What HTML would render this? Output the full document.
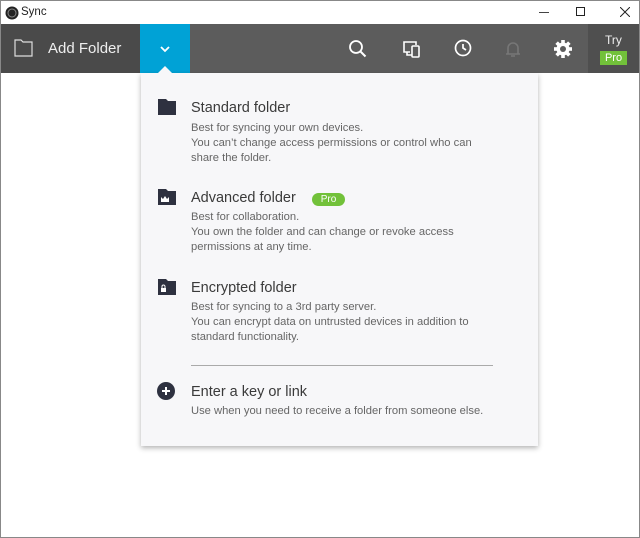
<!DOCTYPE html>
<html><head><style>
*{margin:0;padding:0;box-sizing:border-box}
body{width:640px;height:538px;overflow:hidden;background:#fff;font-family:"Liberation Sans",sans-serif;position:relative}
.abs{position:absolute}
.t{position:absolute;left:191px;font-size:14.5px;color:#3a3a3a}
.d{position:absolute;left:191px;font-size:11.2px;color:#666;line-height:15px}
</style></head><body>
<div class="abs" style="left:0;top:0;width:640px;height:538px;border:1px solid #888"></div>
<svg class="abs" style="left:5px;top:6px" width="14" height="14"><circle cx="7" cy="7" r="6.5" fill="#222"/><circle cx="7" cy="7" r="4" fill="none" stroke="#888" stroke-width="1"/></svg>
<div class="abs" style="left:21px;top:6px;font-size:11.5px;color:#222">Sync</div>
<div class="abs" style="left:539px;top:12px;width:10px;height:1px;background:#444"></div>
<div class="abs" style="left:576px;top:7px;width:9px;height:9px;border:1px solid #222"></div>
<svg class="abs" style="left:620px;top:7px" width="10" height="10"><path d="M0 0l10 10M10 0L0 10" stroke="#222" stroke-width="1"/></svg>
<div class="abs" style="left:1px;top:24px;width:638px;height:49px;background:#5c5c5c"></div>
<div class="abs" style="left:1px;top:24px;width:139px;height:49px;background:#4a4a4a"></div>
<div class="abs" style="left:140px;top:24px;width:50px;height:49px;background:#00a2d6"></div>
<div class="abs" style="left:588px;top:24px;width:51px;height:49px;background:#4f4f4f"></div>
<svg class="abs" style="left:14px;top:38px" width="20" height="20"><path d="M1 2h6l2 2h9v14H1z" fill="none" stroke="#ddd" stroke-width="1.2"/></svg>
<div class="abs" style="left:48px;top:40px;font-size:15px;color:#eee">Add Folder</div>
<svg class="abs" style="left:159px;top:45px" width="12" height="8"><path d="M2 2l4 4 4-4" fill="none" stroke="#fff" stroke-width="1.8"/></svg>
<svg class="abs" style="left:348px;top:39px" width="20" height="20"><circle cx="8" cy="8" r="6" fill="none" stroke="#fff" stroke-width="1.8"/><path d="M12.5 12.5l5 5" stroke="#fff" stroke-width="2"/></svg>
<svg class="abs" style="left:402px;top:40px" width="20" height="18"><path d="M8 12H2V2h12v3" fill="none" stroke="#fff" stroke-width="1.6"/><rect x="10" y="6" width="7" height="11" rx="1" fill="none" stroke="#fff" stroke-width="1.6"/><path d="M5 12v3h5" fill="none" stroke="#fff" stroke-width="1.6"/></svg>
<svg class="abs" style="left:454px;top:39px" width="20" height="20"><circle cx="9" cy="9" r="7.5" fill="none" stroke="#fff" stroke-width="1.7"/><path d="M9 5v4l3 2" fill="none" stroke="#fff" stroke-width="1.7"/></svg>
<svg class="abs" style="left:504px;top:39px" width="20" height="20"><path d="M4 15V9a5 5 0 0110 0v6zM2 15h14M7 17h4" fill="none" stroke="#777" stroke-width="1.6"/></svg>
<svg class="abs" style="left:553px;top:39px" width="20" height="20"><g fill="#fff" transform="translate(10 10)"><circle r="6.5"/><rect x="-1.8" y="-9" width="3.6" height="18"/><rect x="-1.8" y="-9" width="3.6" height="18" transform="rotate(45)"/><rect x="-1.8" y="-9" width="3.6" height="18" transform="rotate(90)"/><rect x="-1.8" y="-9" width="3.6" height="18" transform="rotate(135)"/></g><circle cx="10" cy="10" r="3" fill="#5c5c5c"/></svg>
<div class="abs" style="left:605px;top:33px;font-size:12px;color:#eee">Try</div>
<div class="abs" style="left:600px;top:51px;width:27px;height:14px;background:#72c13a;color:#fff;font-size:11px;text-align:center;line-height:14px">Pro</div>
<div class="abs" style="left:141px;top:73px;width:397px;height:373px;background:#f7f7f9;box-shadow:0 2px 5px rgba(0,0,0,.3)"></div>
<svg class="abs" style="left:157px;top:65px" width="18" height="9"><path d="M0 9l8-8 8 8z" fill="#f7f7f9"/></svg>
<svg class="abs" style="left:158px;top:99px" width="18" height="16"><path d="M0 0h8l2 2h8v14H0z" fill="#2e3140"/></svg>
<div class="t" style="top:100px">Standard folder</div>
<div class="d" style="top:121px">Best for syncing your own devices.<br>You can’t change access permissions or control who can<br>share the folder.</div>
<svg class="abs" style="left:158px;top:189px" width="18" height="16"><path d="M0 0h8l2 2h8v14H0z" fill="#2e3140"/><path d="M3 13l0-5 2 2 2-3 2 3 2-2 0 5z" fill="#fff"/></svg>
<div class="t" style="top:190px">Advanced folder</div>
<div class="abs" style="left:312px;top:193px;width:33px;height:13px;border-radius:7px;background:#72c13a;color:#fff;font-size:10px;text-align:center;line-height:13px">Pro</div>
<div class="d" style="top:210px">Best for collaboration.<br>You own the folder and can change or revoke access<br>permissions at any time.</div>
<svg class="abs" style="left:158px;top:279px" width="18" height="16"><path d="M0 0h8l2 2h8v14H0z" fill="#2e3140"/><rect x="3" y="9" width="5" height="4" fill="#fff"/><path d="M4 9V7.5a1.5 1.5 0 013 0V9" fill="none" stroke="#fff"/></svg>
<div class="t" style="top:280px">Encrypted folder</div>
<div class="d" style="top:300px">Best for syncing to a 3rd party server.<br>You can encrypt data on untrusted devices in addition to<br>standard functionality.</div>
<div class="abs" style="left:191px;top:365px;width:302px;height:1px;background:#aaa"></div>
<svg class="abs" style="left:157px;top:382px" width="18" height="18"><circle cx="9" cy="9" r="9" fill="#2e3140"/><path d="M9 5v8M5 9h8" stroke="#fff" stroke-width="2"/></svg>
<div class="t" style="top:384px">Enter a key or link</div>
<div class="d" style="top:404px">Use when you need to receive a folder from someone else.</div>
</body></html>
